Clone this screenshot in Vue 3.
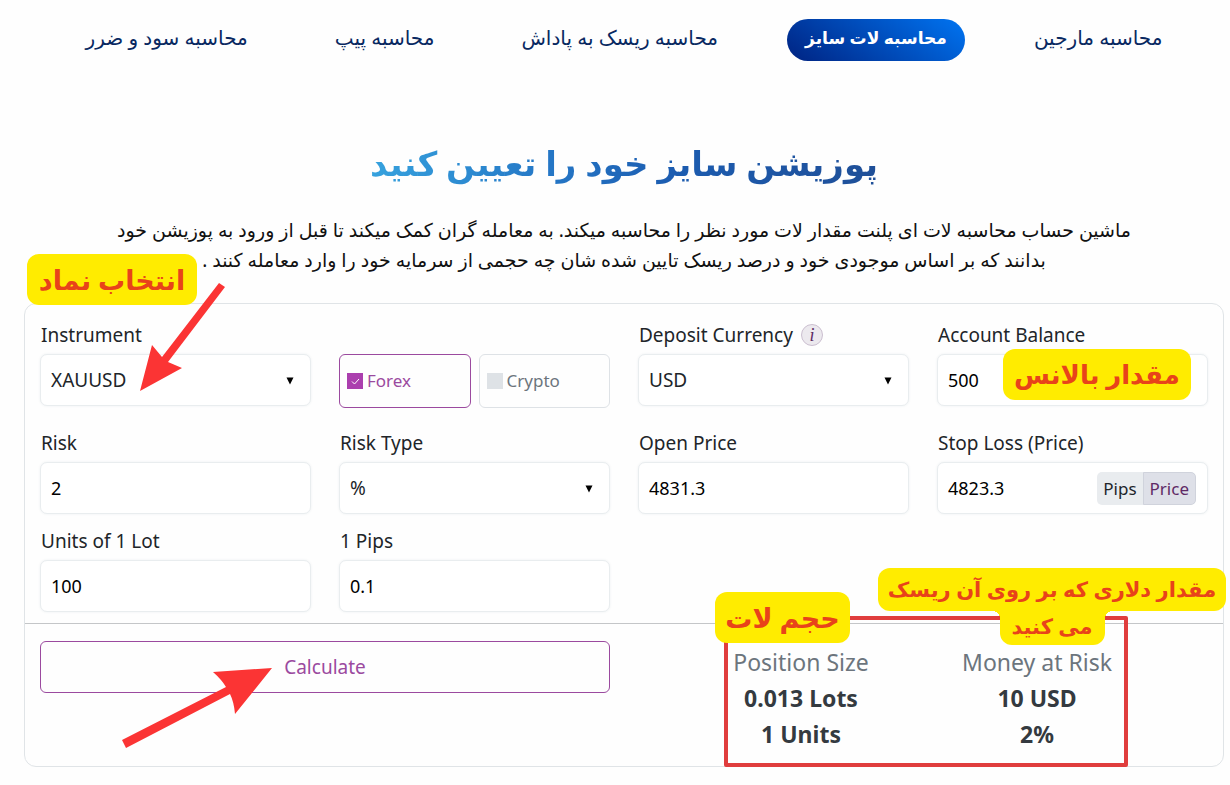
<script setup>
import { ref } from 'vue'

const tabs = [
  { id: 'margin', label: 'محاسبه مارجین' },
  { id: 'lot', label: 'محاسبه لات سایز' },
  { id: 'reward', label: 'محاسبه ریسک به پاداش' },
  { id: 'pip', label: 'محاسبه پیپ' },
  { id: 'profit', label: 'محاسبه سود و ضرر' },
]
const activeTab = ref('lot')
const instrument = ref('XAUUSD')
const market = ref('forex')
const currency = ref('USD')
const balance = ref('500')
const risk = ref('2')
const riskType = ref('%')
const openPrice = ref('4831.3')
const stopLoss = ref('4823.3')
const stopMode = ref('price')
const lotUnits = ref('100')
const pips = ref('0.1')
</script>

<template>
  <main class="page">
    <nav class="tabs" dir="rtl" lang="fa">
      <a
        v-for="tab in tabs"
        :key="tab.id"
        href="#"
        class="tab"
        :class="{ active: tab.id === activeTab }"
        @click.prevent="activeTab = tab.id"
      >{{ tab.label }}</a>
    </nav>

    <header class="intro" dir="rtl" lang="fa">
      <h1 class="title">پوزیشن سایز خود را تعیین کنید</h1>
      <p class="lead">
        ماشین حساب محاسبه لات ای پلنت مقدار لات مورد نظر را محاسبه میکند. به معامله گران کمک میکند تا قبل از ورود به پوزیشن خود<br>
        بدانند که بر اساس موجودی خود و درصد ریسک تایین شده شان چه حجمی از سرمایه خود را وارد معامله کنند .
      </p>
    </header>

    <form class="card" @submit.prevent>
      <div class="fields">
        <div class="field">
          <label for="instrument">Instrument</label>
          <div class="control">
            <select id="instrument" v-model="instrument"><option>XAUUSD</option></select>
            <svg class="caret" viewBox="0 0 8 8"><path d="M0.5 0.5H7.5L4 7.5Z" /></svg>
          </div>
        </div>
        <div class="field markets">
          <label class="market" :class="{ on: market === 'forex' }">
            <input v-model="market" type="radio" name="market" value="forex"><span>Forex</span>
            <svg class="tick" viewBox="0 0 16 16"><path d="M5 8.5L7.5 11L12 6" /></svg>
          </label>
          <label class="market" :class="{ on: market === 'crypto' }">
            <input v-model="market" type="radio" name="market" value="crypto"><span>Crypto</span>
          </label>
        </div>
        <div class="field">
          <div class="label-row">
            <label for="currency">Deposit Currency</label>
            <button type="button" class="info" aria-label="Info">i</button>
          </div>
          <div class="control">
            <select id="currency" v-model="currency"><option>USD</option></select>
            <svg class="caret" viewBox="0 0 8 8"><path d="M0.5 0.5H7.5L4 7.5Z" /></svg>
          </div>
        </div>
        <div class="field">
          <label for="balance">Account Balance</label>
          <div class="control">
            <input id="balance" v-model="balance" type="text">
            <span class="tag tag-balance" dir="rtl" lang="fa">مقدار بالانس</span>
          </div>
        </div>

        <div class="field">
          <label for="risk">Risk</label>
          <div class="control"><input id="risk" v-model="risk" type="text"></div>
        </div>
        <div class="field">
          <label for="risk-type">Risk Type</label>
          <div class="control">
            <select id="risk-type" v-model="riskType"><option>%</option></select>
            <svg class="caret" viewBox="0 0 8 8"><path d="M0.5 0.5H7.5L4 7.5Z" /></svg>
          </div>
        </div>
        <div class="field">
          <label for="open">Open Price</label>
          <div class="control"><input id="open" v-model="openPrice" type="text"></div>
        </div>
        <div class="field">
          <label for="stop">Stop Loss (Price)</label>
          <div class="control boxed">
            <input id="stop" v-model="stopLoss" type="text">
            <div class="switch">
              <button type="button" :class="{ on: stopMode === 'pips' }" @click="stopMode = 'pips'">Pips</button>
              <button type="button" :class="{ on: stopMode === 'price' }" @click="stopMode = 'price'">Price</button>
            </div>
          </div>
        </div>

        <div class="field">
          <label for="units">Units of 1 Lot</label>
          <div class="control"><input id="units" v-model="lotUnits" type="text"></div>
        </div>
        <div class="field">
          <label for="pips">1 Pips</label>
          <div class="control"><input id="pips" v-model="pips" type="text"></div>
        </div>
      </div>

      <div class="summary">
        <button type="submit" class="calculate">Calculate</button>
        <div class="results">
          <div class="frame"></div>
          <dl class="result">
            <dt>Position Size</dt>
            <dd>0.013 Lots</dd>
            <dd>1 Units</dd>
          </dl>
          <dl class="result">
            <dt>Money at Risk</dt>
            <dd>10 USD</dd>
            <dd>2%</dd>
          </dl>
          <span class="tag tag-lot" dir="rtl" lang="fa">حجم لات</span>
          <div class="tag-risk" dir="rtl" lang="fa">
            <span class="line first">مقدار دلاری که بر روی آن ریسک</span>
            <span class="line second">می کنید</span>
          </div>
        </div>
      </div>

      <span class="tag tag-symbol" dir="rtl" lang="fa">انتخاب نماد</span>
      <svg class="arrow arrow-symbol" viewBox="0 0 86 110">
        <path d="M79 1L22 75L12 63L0 109L42 86L28 80L85 5Z" />
      </svg>
      <svg class="arrow arrow-calc" viewBox="0 0 150 82">
        <path d="M0 73L104 20Q100 13 91 5L150 1L113 47Q112 35 108 27L4 81Z" />
      </svg>
    </form>
  </main>
</template>

<style>
body {
  margin: 0;
  background: #fefefe;
}
</style>

<style scoped>
* {
  box-sizing: border-box;
}

.page {
  padding: 19px 6px 18px 24px;
  font-family: "Noto Sans", "DejaVu Sans", sans-serif;
  font-size: 19px;
  color: #212529;
}

input,
select,
button {
  font: inherit;
  color: inherit;
}

.tabs {
  display: flex;
  justify-content: center;
  gap: 51px;
}

.tab {
  padding: 0 18px 4px;
  border-radius: 21px;
  font-size: 20px;
  font-weight: 500;
  line-height: 38px;
  color: #082861;
  text-decoration: none;
  white-space: nowrap;
}

.tab.active {
  background: linear-gradient(35deg, #002787 5%, #0070ec 95%);
  color: #fff;
  font-size: 17px;
  font-weight: 700;
}

.intro {
  display: flex;
  flex-direction: column;
  align-items: center;
  text-align: center;
}

.title {
  margin: 70px 0 0;
  font-size: 34px;
  font-weight: 700;
  line-height: 64px;
  background: linear-gradient(270deg, #1f4f98, #1c5cb0 40%, #2577c6 65%, #36a2de);
  -webkit-background-clip: text;
  background-clip: text;
  color: transparent;
}

.lead {
  margin: 20px 0 0;
  font-size: 19px;
  line-height: 30px;
  color: #111;
  white-space: nowrap;
}

.card {
  position: relative;
  margin-top: 28px;
  border: 1px solid #e0e4e7;
  border-radius: 12px;
}

.fields {
  display: grid;
  grid-template-columns: repeat(4, minmax(0, 1fr));
  gap: 16px 28px;
  padding: 12px 15px 11px;
}

.field {
  display: flex;
  flex-direction: column;
}

.field:nth-child(-n+4) {
  padding-bottom: 10px;
}

.field > label,
.label-row {
  padding-left: 1px;
  line-height: 38px;
  height: 38px;
  white-space: nowrap;
}

.field:nth-child(n+5) > label {
  height: 30px;
  line-height: 22px;
}

.label-row {
  display: flex;
  align-items: center;
  gap: 8px;
}

.info {
  width: 22px;
  height: 22px;
  padding: 0;
  border: 1px solid #cbbfd0;
  border-radius: 50%;
  background: #ece9ee;
  color: #5d2a63;
  font: italic 18px/18px "Liberation Serif", serif;
}

.control {
  position: relative;
}

.control > input,
.control > select,
.boxed {
  display: block;
  width: 100%;
  height: 52px;
  padding: 0 10px;
  border: 1px solid #e9edef;
  border-radius: 7px;
  background: #fff;
  box-shadow: 0 0 3px #eef1f2;
  outline: 0;
}

.control > input {
  color: #000;
  font-size: 18px;
}

.control > select {
  appearance: none;
}

.caret {
  position: absolute;
  right: 17px;
  top: 23px;
  width: 8px;
  height: 8px;
}

.boxed {
  display: flex;
  align-items: center;
  padding-right: 11px;
}

.boxed > input {
  flex: 1;
  min-width: 0;
  height: 48px;
  padding: 0;
  border: 0;
  box-shadow: none;
}

.switch {
  display: flex;
  height: 33px;
  border-radius: 5px;
  overflow: hidden;
  background: #e9ecef;
  font-size: 17px;
}

.switch button {
  padding: 0 6px;
  border: 0;
  background: transparent;
}

.switch .on {
  border: 1px solid #d0d3dc;
  border-radius: 0 5px 5px 0;
  background: #dee0e8;
  color: #5f2a66;
}

.markets {
  flex-direction: row;
  gap: 8px;
  height: 54px;
  margin-top: 38px;
}

.field > .market {
  position: relative;
  flex: 1;
  display: flex;
  align-items: center;
  gap: 4px;
  height: 54px;
  padding: 0 7px;
  border: 1px solid #dee2e6;
  border-radius: 6px;
  color: #6c757d;
  font-size: 17px;
}

.field > .market.on {
  border-color: #9b4a9f;
  color: #9b4a9f;
}

.market input {
  appearance: none;
  width: 16px;
  height: 16px;
  margin: 0;
  background: #dee2e6;
}

.market.on input {
  background: #ab3fae;
}

.tick {
  position: absolute;
  left: 7px;
  top: 18px;
  width: 16px;
  height: 16px;
  fill: none;
  stroke: #fff;
}

.summary {
  display: grid;
  grid-template-columns: repeat(2, minmax(0, 1fr));
  gap: 28px;
  padding: 17px 15px 14px;
  border-top: 1px solid #c4c6c8;
}

.calculate {
  height: 52px;
  border: 1px solid #9b4a9f;
  border-radius: 6px;
  background: transparent;
  color: #9b4a9f;
}

.results {
  position: relative;
  display: grid;
  grid-template-columns: repeat(2, 1fr);
  padding: 3px 53px 0 45px;
  text-align: center;
  white-space: nowrap;
}

.frame {
  position: absolute;
  left: 86px;
  right: 80px;
  top: -25px;
  bottom: -15px;
  border: 4px solid #e03d3d;
  border-radius: 2px;
}

.result {
  margin: 0;
  font-size: 23px;
  line-height: 36px;
}

.result dt {
  color: #6c757d;
}

.result dd {
  margin: 0;
  font-weight: 700;
  color: #343a40;
}

.tag,
.line {
  border-radius: 12px;
  background: #ffec00;
  color: #e8431a;
  font-weight: 700;
  text-align: center;
  white-space: nowrap;
}

.tag {
  position: absolute;
  height: 51px;
  font-size: 27px;
  line-height: 51px;
}

.tag-symbol {
  left: 2px;
  top: -50px;
  width: 170px;
}

.tag-balance {
  right: 17px;
  top: -5px;
  width: 188px;
  font-size: 26px;
}

.tag-lot {
  left: 77px;
  top: -49px;
  width: 135px;
}

.tag-risk {
  position: absolute;
  right: -18px;
  top: -73px;
  width: 348px;
  display: flex;
  flex-direction: column;
  align-items: center;
  font-size: 21px;
}

.line.first {
  width: 100%;
  line-height: 43px;
}

.line.second {
  position: relative;
  width: 105px;
  margin-top: -4px;
  border-radius: 0 0 12px 12px;
  line-height: 38px;
}

.line.second::before,
.line.second::after {
  content: "";
  position: absolute;
  top: 4px;
  width: 8px;
  height: 8px;
}

.line.second::before {
  left: -8px;
  background: radial-gradient(circle at 0 100%, transparent 8px, #ffec00 8px);
}

.line.second::after {
  right: -8px;
  background: radial-gradient(circle at 100% 100%, transparent 8px, #ffec00 8px);
}

.arrow {
  position: absolute;
  fill: #fb3434;
  pointer-events: none;
}

.arrow-symbol {
  left: 115px;
  top: -22px;
  width: 86px;
  height: 110px;
}

.arrow-calc {
  left: 97px;
  top: 363px;
  width: 150px;
  height: 82px;
}
</style>
